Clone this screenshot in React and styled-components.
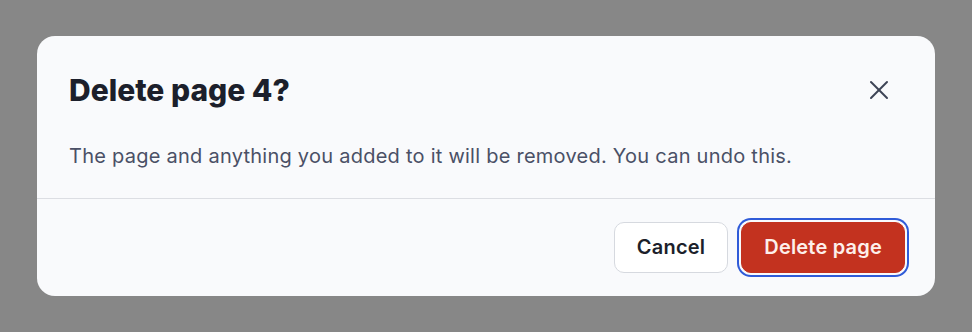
import React from 'react';
import styled, { createGlobalStyle } from 'styled-components';
import { X } from 'lucide-react';

const GlobalStyle = createGlobalStyle`
  html, body {
    margin: 0;
    padding: 0;
    background: #878787;
  }
  body {
    font-family: Inter, "Noto Sans", sans-serif;
  }
`;

const Backdrop = styled.div`
  width: 972px;
  height: 332px;
  box-sizing: border-box;
  padding: 36px 37px;
  background: #878787;
`;

const Dialog = styled.div`
  height: 100%;
  box-sizing: border-box;
  background: #f9fafc;
  border-radius: 18px;
  display: flex;
  flex-direction: column;
  overflow: hidden;
`;

const Header = styled.div`
  display: flex;
  align-items: center;
  justify-content: space-between;
  padding: 34px 32px 0 32px;
`;

const Title = styled.h2`
  margin: 0;
  font-size: 30px;
  font-weight: 800;
  letter-spacing: 0;
  color: #1c1f2b;
  line-height: 36px;
`;

const CloseButton = styled.button`
  width: 40px;
  height: 40px;
  margin-right: 4px;
  border: none;
  background: transparent;
  display: flex;
  align-items: center;
  justify-content: center;
  color: #3d4355;
  cursor: pointer;
  padding: 0;
`;

const Body = styled.p`
  margin: 0;
  padding: 32px 32px 28px 32px;
  font-size: 20px;
  letter-spacing: 0.25px;
  line-height: 28px;
  color: #4a5066;
  border-bottom: 1px solid #dcdee3;
`;

const Footer = styled.div`
  display: flex;
  justify-content: flex-end;
  align-items: center;
  gap: 13px;
  padding: 0 30px 1px 32px;
  flex: 1;
`;

const Button = styled.button`
  height: 51px;
  padding: 0 22px;
  border-radius: 10px;
  font-family: Inter, "Noto Sans", sans-serif;
  font-size: 20px;
  letter-spacing: 0.2px;
  font-weight: 600;
  cursor: pointer;
  border: 1px solid ${p => (p.$danger ? '#c3321f' : '#d6d9df')};
  background: ${p => (p.$danger ? '#c3321f' : '#ffffff')};
  color: ${p => (p.$danger ? '#fdefeb' : '#1c1f2b')};
  box-shadow: ${p => (p.$danger ? '0 0 0 2px #f9fafc, 0 0 0 4px #2f5bd8' : 'none')};
`;

export default function App() {
  return (
    <>
      <GlobalStyle />
      <Backdrop>
        <Dialog>
          <Header>
            <Title>Delete page 4?</Title>
            <CloseButton aria-label="Close">
              <X size={32} strokeWidth={1.5} />
            </CloseButton>
          </Header>
          <Body>The page and anything you added to it will be removed. You can undo this.</Body>
          <Footer>
            <Button>Cancel</Button>
            <Button $danger>Delete page</Button>
          </Footer>
        </Dialog>
      </Backdrop>
    </>
  );
}
